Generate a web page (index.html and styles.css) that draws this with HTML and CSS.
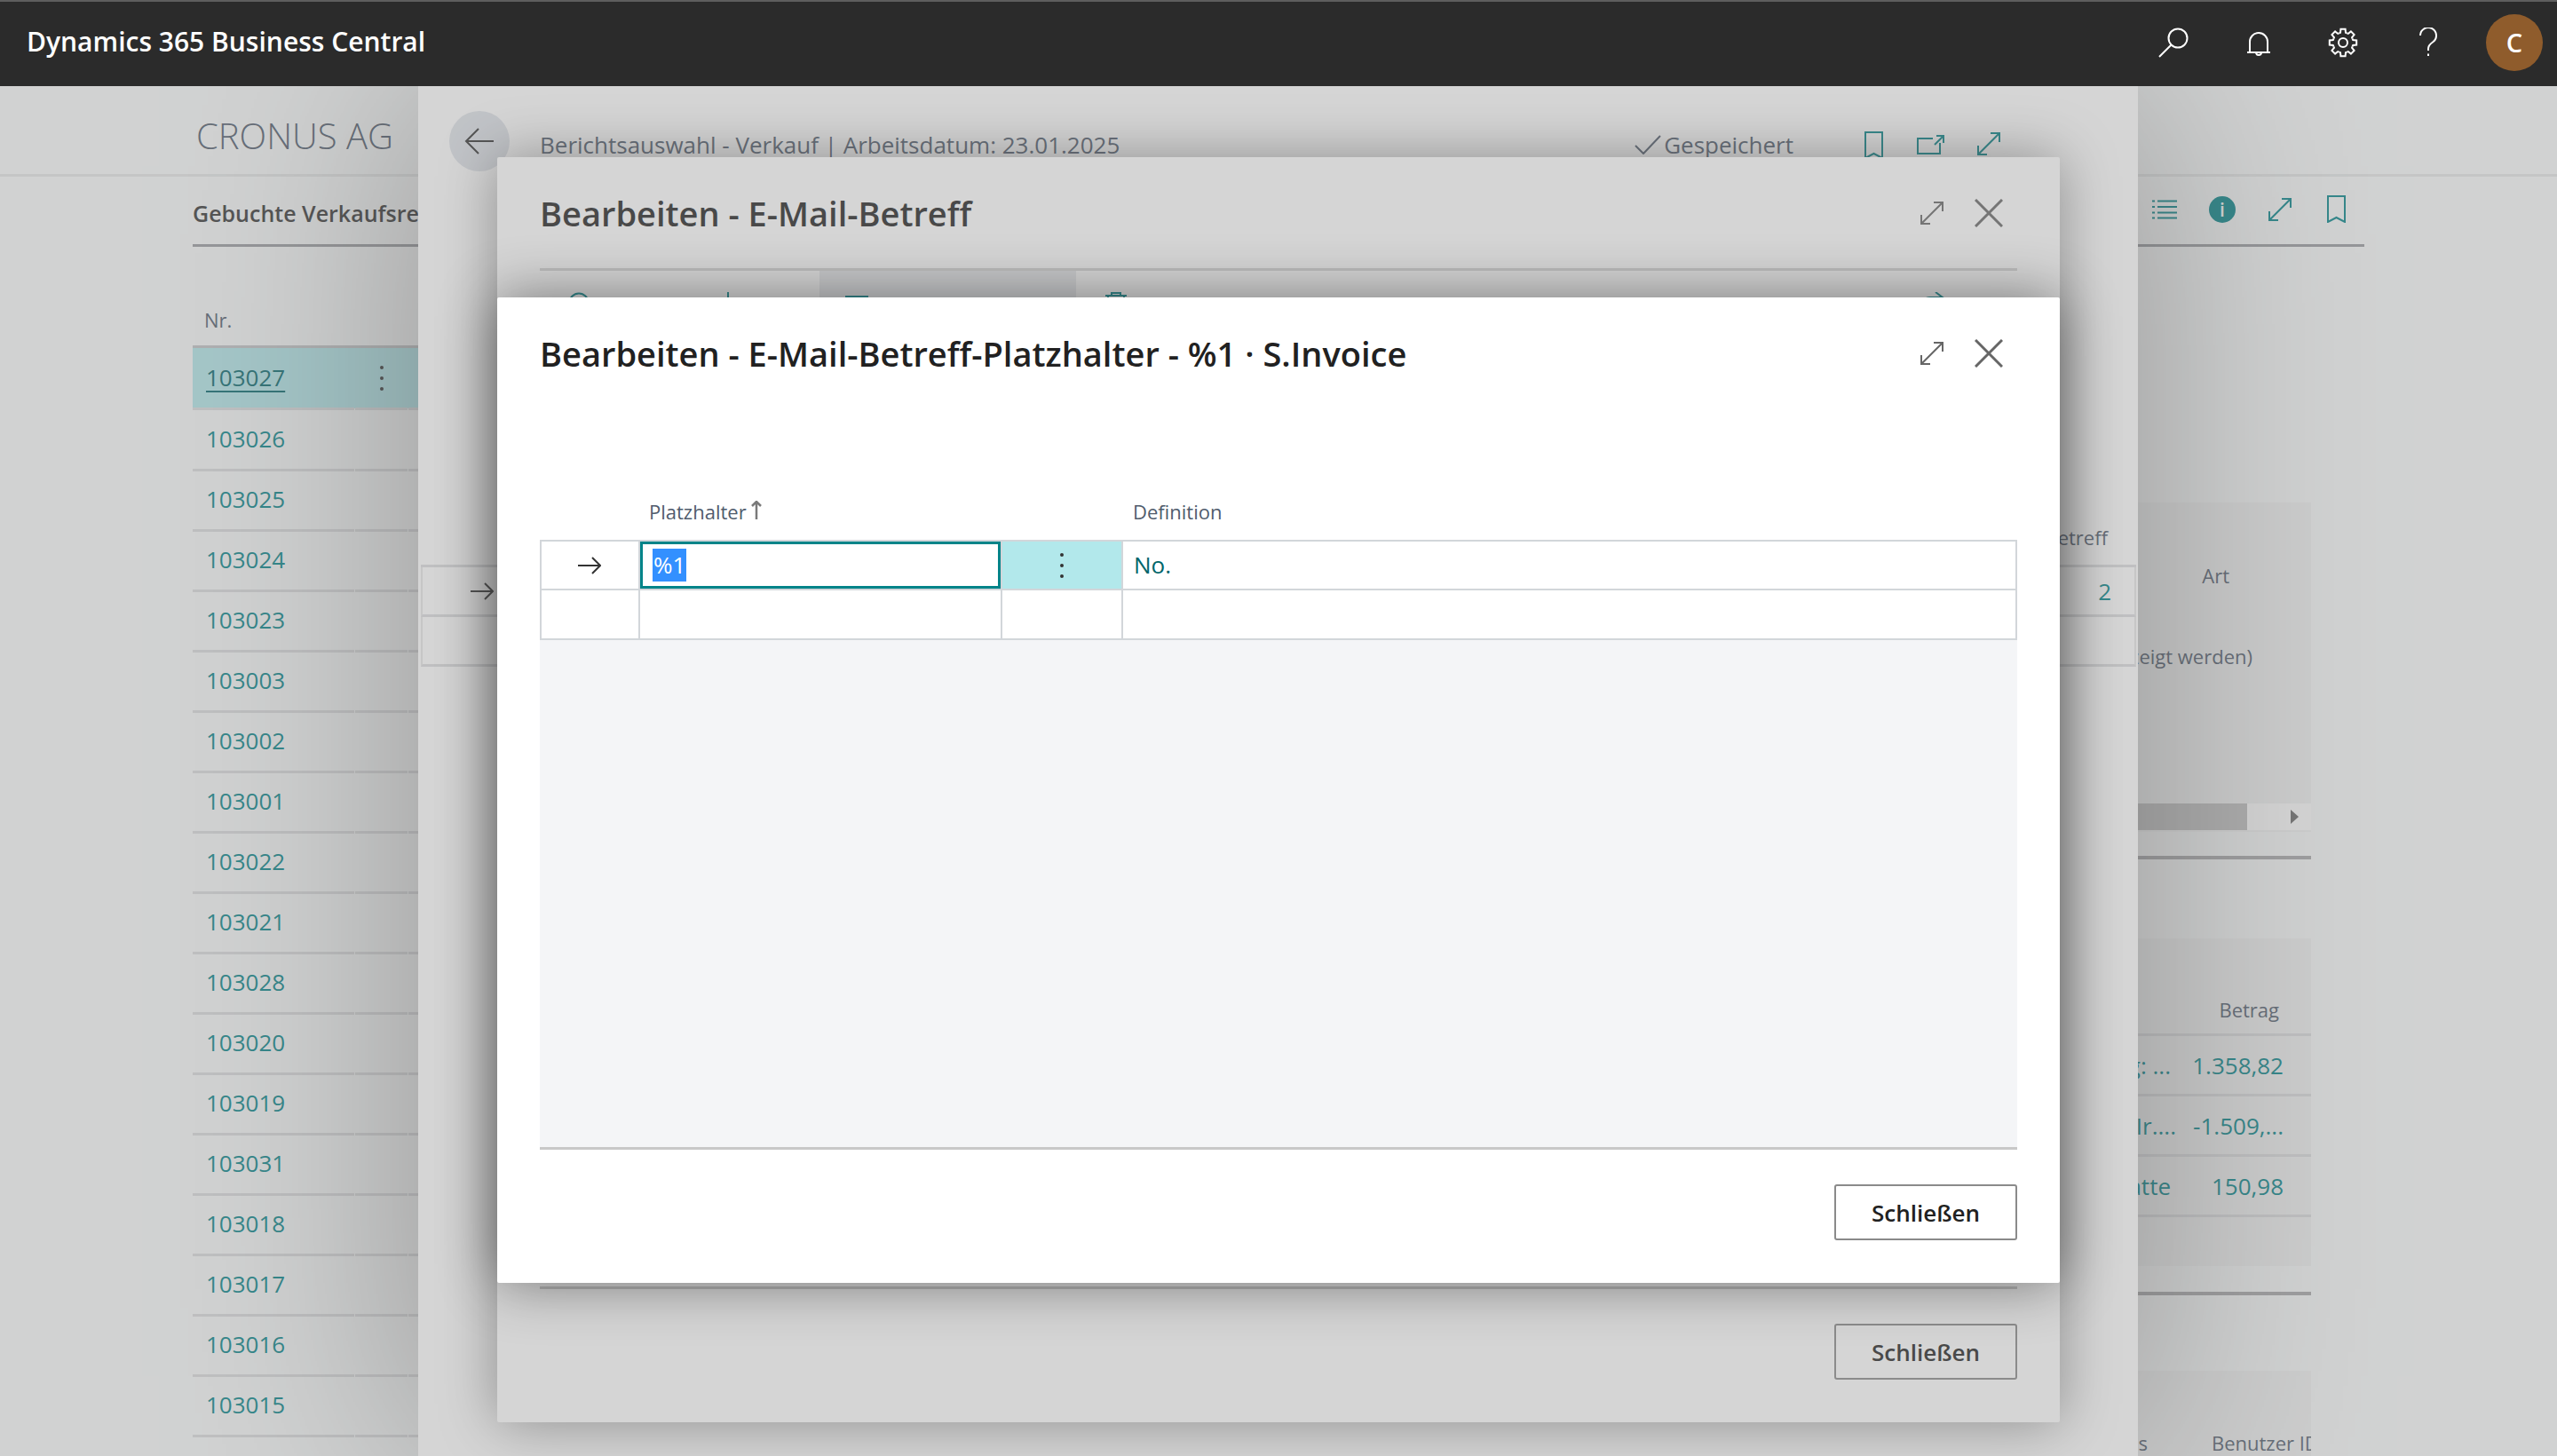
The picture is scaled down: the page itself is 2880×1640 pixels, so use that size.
FILE: index.html
```html
<!DOCTYPE html>
<html lang="de">
<head>
  <meta charset="UTF-8">
  <title>Dynamics 365 Business Central</title>
  <link rel="stylesheet" href="styles.css">
</head>
<body>
  <svg class="defs" width="0" height="0">
    <defs>
      <path id="gear-tooth" d="M-4.4 -10.6L-3 -11.2L-2.6 -15.2H2.6L3 -11.2L4.4 -10.6"/>
      <g id="ico-expand" fill="none" stroke="currentColor" stroke-width="2">
        <path d="M2 26L26 2M16 2H26V12M2 16V26H12"/>
      </g>
      <g id="ico-close" fill="none" stroke="currentColor" stroke-width="3">
        <path d="M1 1L31 31M31 1L1 31"/>
      </g>
      <g id="ico-bookmark" fill="none" stroke="currentColor" stroke-width="2">
        <path d="M1 1H20V30L10.500 25L1 30Z"/>
      </g>
      <g id="ico-arrow" fill="none" stroke="currentColor" stroke-width="2">
        <path d="M0 10H25M16 1L25 10L16 19"/>
      </g>
    </defs>
  </svg>

  <header class="topbar">
    <div class="brand">Dynamics 365 Business Central</div>
    <div class="topbar-icons">
      <svg class="ti ti-search" width="34" height="34" viewBox="0 0 34 34"><circle cx="22" cy="12" r="10.500"/><path d="M14.500 19.500L1 33"/></svg>
      <svg class="ti ti-bell" width="26" height="30" viewBox="0 0 26 30"><path d="M3 24V12a10 10 0 0 1 20 0V24M0 24H26M10 24a3 3 0 0 0 6 0"/></svg>
      <svg class="ti ti-gear" width="34" height="34" viewBox="0 0 34 34">
        <g transform="translate(17 17)">
          <use href="#gear-tooth"/>
          <use href="#gear-tooth" transform="rotate(45)"/>
          <use href="#gear-tooth" transform="rotate(90)"/>
          <use href="#gear-tooth" transform="rotate(135)"/>
          <use href="#gear-tooth" transform="rotate(180)"/>
          <use href="#gear-tooth" transform="rotate(225)"/>
          <use href="#gear-tooth" transform="rotate(270)"/>
          <use href="#gear-tooth" transform="rotate(315)"/>
          <circle r="5"/>
        </g>
      </svg>
      <svg class="ti ti-help" width="20" height="33" viewBox="0 0 20 33"><path d="M1 9a9 9 0 1 1 14 7.500c-3 2-5 3.500-5 7.500v2"/><path d="M10 29.500v2.500"/></svg>
      <div class="avatar">C</div>
    </div>
  </header>

  <main class="stage">
    <!-- Seite im Hintergrund -->
    <div class="company-bar"><span class="company">CRONUS AG</span></div>
    <div class="page-body">
      <div class="page-title-row">
        <span class="page-title">Gebuchte Verkaufsrechnungen</span>
        <div class="page-actions">
          <svg class="teal" width="28" height="22" viewBox="0 0 28 22"><path d="M0 1.500H3M6 1.500H28M0 8H3M6 8H28M0 14.500H3M6 14.500H28M0 20.500H3M6 20.500H28" stroke="currentColor" stroke-width="2"/></svg>
          <div class="info-dot">i</div>
          <svg class="teal" width="28" height="28" viewBox="0 0 28 28"><use href="#ico-expand"/></svg>
          <svg class="teal page-bm" width="21" height="31" viewBox="0 0 21 31"><use href="#ico-bookmark"/></svg>
        </div>
      </div>
      <div class="page-columns">
        <div class="doc-list">
          <div class="doc-head"><span>Nr.</span><span></span><span>Debitor</span></div>
          <div class="doc-row is-current"><a class="doc-no">103027</a><span class="doc-menu"><i></i><i></i><i></i></span><span></span></div>
          <div class="doc-row"><a class="doc-no">103026</a><span></span><span></span></div>
          <div class="doc-row"><a class="doc-no">103025</a><span></span><span></span></div>
          <div class="doc-row"><a class="doc-no">103024</a><span></span><span></span></div>
          <div class="doc-row"><a class="doc-no">103023</a><span></span><span></span></div>
          <div class="doc-row"><a class="doc-no">103003</a><span></span><span></span></div>
          <div class="doc-row"><a class="doc-no">103002</a><span></span><span></span></div>
          <div class="doc-row"><a class="doc-no">103001</a><span></span><span></span></div>
          <div class="doc-row"><a class="doc-no">103022</a><span></span><span></span></div>
          <div class="doc-row"><a class="doc-no">103021</a><span></span><span></span></div>
          <div class="doc-row"><a class="doc-no">103028</a><span></span><span></span></div>
          <div class="doc-row"><a class="doc-no">103020</a><span></span><span></span></div>
          <div class="doc-row"><a class="doc-no">103019</a><span></span><span></span></div>
          <div class="doc-row"><a class="doc-no">103031</a><span></span><span></span></div>
          <div class="doc-row"><a class="doc-no">103018</a><span></span><span></span></div>
          <div class="doc-row"><a class="doc-no">103017</a><span></span><span></span></div>
          <div class="doc-row"><a class="doc-no">103016</a><span></span><span></span></div>
          <div class="doc-row"><a class="doc-no">103015</a><span></span><span></span></div>
        </div>
        <aside class="factbox">
          <section class="fact-card fact-empty">
            <div class="fact-art">Art</div>
            <div class="fact-note">(Es können keine Daten angezeigt werden)</div>
            <div class="fact-scroll"><span class="fact-thumb"></span><span class="fact-caret"></span></div>
          </section>
          <div class="fact-rule"></div>
          <section class="fact-card fact-lines">
            <div class="fact-head">Betrag</div>
            <div class="fact-row"><span>Betrag: ...</span><b>1.358,82</b></div>
            <div class="fact-row fact-row-long"><span>Beleg Ir....</span><b>-1.509,...</b></div>
            <div class="fact-row"><span>Rabatte</span><b>150,98</b></div>
          </section>
          <div class="fact-rule"></div>
          <section class="fact-card fact-user">
            <div class="fact-user-head"><span>Status</span><span>Benutzer ID</span></div>
          </section>
        </aside>
      </div>
    </div>

    <!-- Berichtsauswahl -->
    <section class="panel">
      <div class="panel-head">
        <div class="back-btn"><svg width="34" height="30" viewBox="0 0 34 30"><path d="M33 15H2M16 1L2 15L16 29" fill="none" stroke="currentColor" stroke-width="2"/></svg></div>
        <span class="crumb">Berichtsauswahl - Verkauf | Arbeitsdatum: 23.01.2025</span>
        <span class="saved">
          <svg width="30" height="22" viewBox="0 0 30 22"><path d="M1 12L10 21L29 1" fill="none" stroke="currentColor" stroke-width="2"/></svg>
          Gespeichert
        </span>
        <svg class="teal panel-bm" width="21" height="31" viewBox="0 0 21 31"><use href="#ico-bookmark"/></svg>
        <svg class="teal panel-share" width="31" height="22" viewBox="0 0 31 22"><path d="M18 4H1V21H26V9M20 11L29 2M22 1H30V9" fill="none" stroke="currentColor" stroke-width="2"/></svg>
        <svg class="teal panel-exp" width="28" height="28" viewBox="0 0 28 28"><use href="#ico-expand"/></svg>
      </div>
      <div class="panel-table">
        <div class="panel-table-head">E-Mail-Betreff</div>
        <div class="panel-row"><svg class="row-arrow" width="26" height="20" viewBox="0 0 26 20"><use href="#ico-arrow"/></svg><span class="panel-val">2</span></div>
        <div class="panel-row"></div>
      </div>
    </section>

    <!-- hinterer Dialog -->
    <section class="dialog dialog-back">
      <div class="dialog-head">
        <h2 class="dialog-title">Bearbeiten - E-Mail-Betreff</h2>
        <svg class="dlg-expand" width="28" height="28" viewBox="0 0 28 28"><use href="#ico-expand"/></svg>
        <svg class="dlg-close" width="32" height="32" viewBox="0 0 32 32"><use href="#ico-close"/></svg>
      </div>
      <div class="dialog-body">
        <div class="toolbar">
          <div class="tool tool-search"><svg width="24" height="24" viewBox="0 0 24 24"><circle cx="12" cy="12" r="10.500" fill="none" stroke="currentColor" stroke-width="2"/></svg>Suchen</div>
          <div class="tool tool-new"><svg width="24" height="24" viewBox="0 0 24 24"><path d="M12 0V24M0 12H24" stroke="currentColor" stroke-width="2"/></svg>Neu</div>
          <div class="tool tool-edit"><span class="tool-square"></span>Liste bearbeiten</div>
          <div class="tool tool-del"><svg width="24" height="26" viewBox="0 0 24 26"><path d="M7 4V1H17V4M0 4H24M3 4V25H21V4" fill="none" stroke="currentColor" stroke-width="2"/></svg>Löschen</div>
          <div class="tool-right">
            <svg width="28" height="26" viewBox="0 0 28 26"><path d="M2 24V16a10 10 0 0 1 10-10H26M18 0L26 6L18 12" fill="none" stroke="currentColor" stroke-width="2"/></svg>
            <span class="tool-bars"></span>
          </div>
        </div>
      </div>
      <div class="dialog-foot"><button class="btn">Schließen</button></div>
    </section>

    <div class="scrim"></div>

    <!-- vorderer Dialog -->
    <section class="dialog dialog-front">
      <div class="dialog-head">
        <h2 class="dialog-title">Bearbeiten - E-Mail-Betreff-Platzhalter - %1 · S.Invoice</h2>
        <svg class="dlg-expand" width="28" height="28" viewBox="0 0 28 28"><use href="#ico-expand"/></svg>
        <svg class="dlg-close" width="32" height="32" viewBox="0 0 32 32"><use href="#ico-close"/></svg>
      </div>
      <div class="dialog-body ph-body">
        <div class="ph-head">
          <span></span>
          <span class="ph-col">Platzhalter <svg class="sort-up" width="12" height="21" viewBox="0 0 12 21"><path d="M6 1V21M1 6L6 1L11 6" fill="none" stroke="currentColor" stroke-width="2.500"/></svg></span>
          <span></span>
          <span class="ph-col ph-col-def">Definition</span>
        </div>
        <div class="ph-grid">
          <div class="ph-cell ph-arrow"><svg width="26" height="20" viewBox="0 0 26 20"><use href="#ico-arrow"/></svg></div>
          <div class="ph-cell ph-focus"><span class="ph-selected">%1</span></div>
          <div class="ph-cell ph-menu"><i></i><i></i><i></i></div>
          <div class="ph-cell ph-value">No.</div>
          <div class="ph-cell"></div>
          <div class="ph-cell"></div>
          <div class="ph-cell"></div>
          <div class="ph-cell"></div>
        </div>
        <div class="ph-rest"></div>
      </div>
      <div class="dialog-foot"><button class="btn">Schließen</button></div>
    </section>
  </main>
</body>
</html>
```

FILE: styles.css
```css
* {
  box-sizing: border-box;
}
html, body {
  margin: 0;
  height: 100%;
}
body {
  width: 2880px;
  height: 1640px;
  overflow: hidden;
  background: #f9fbfb;
  color: #212121;
  font-family: "Open Sans", "Noto Sans", sans-serif;
  font-size: 26px;
}
.defs {
  position: absolute;
}
.teal {
  color: #008489;
  display: block;
  flex: none;
}

/* Kopfzeile */
.topbar {
  height: 97px;
  background: #2b2b2b;
  border-top: 2px solid #5e5e5e;
  display: flex;
  align-items: center;
  justify-content: space-between;
  padding: 0 16px 4px 30px;
  color: #fff;
}
.brand {
  font-size: 30px;
  font-weight: 600;
  margin-top: -2px;
}
.topbar-icons {
  display: flex;
  align-items: center;
}
.ti {
  fill: none;
  stroke: #fff;
  stroke-width: 2;
  display: block;
}
.ti use {
  stroke: #fff;
}
.ti-bell {
  margin-left: 66px;
  margin-top: 4px;
}
.ti-gear {
  margin-left: 65px;
}
.ti-help {
  margin-left: 69px;
}
.avatar {
  width: 64px;
  height: 64px;
  margin-left: 55px;
  border-radius: 50%;
  background: #8f5c2c;
  color: #fff;
  display: flex;
  align-items: center;
  justify-content: center;
  font-size: 29px;
  font-weight: 600;
}

/* Seite */
.stage {
  position: relative;
  height: 1543px;
  overflow: hidden;
}
.company-bar {
  height: 102px;
  border-bottom: 3px solid #e6e8e8;
  padding: 34px 0 0 221px;
}
.company {
  font-size: 40px;
  font-weight: 300;
  line-height: 44px;
  color: #505c6d;
}
.page-body {
  padding: 0 217px;
}
.page-title-row {
  height: 79px;
  border-bottom: 3px solid #9a9ca0;
  display: flex;
  justify-content: space-between;
  align-items: flex-start;
}
.page-title {
  font-weight: 600;
  font-size: 25px;
  line-height: 34px;
  margin-top: 24px;
  color: #333;
}
.page-actions {
  display: flex;
  align-items: center;
  gap: 36px;
  margin: 21px 21px 0 0;
}
.page-bm {
  margin-left: 3px;
}
.info-dot {
  width: 30px;
  height: 30px;
  border-radius: 50%;
  background: #008489;
  color: #fff;
  font-size: 21px;
  font-weight: 600;
  line-height: 30px;
  text-align: center;
}
.page-columns {
  display: flex;
  justify-content: space-between;
}

.doc-list {
  width: 1000px;
  padding-top: 64px;
}
.doc-head,
.doc-row {
  display: grid;
  grid-template-columns: 182px 59px 1fr;
  gap: 1px;
}
.doc-head {
  height: 50px;
  padding-left: 13px;
  font-size: 22px;
  line-height: 36px;
  color: #505c6d;
}
.doc-row {
  height: 68px;
}
.doc-row > * {
  border-bottom: 3px solid #dcdddf;
}
.doc-no {
  color: #008489;
  padding-left: 15px;
  line-height: 68px;
}
.is-current {
  background: #b2e8eb;
  border-top: 3px solid #c2c4c6;
  margin-top: -3px;
  height: 71px;
}
.is-current .doc-no {
  color: #00666b;
  text-decoration: underline;
  text-underline-offset: 5px;
  line-height: 67px;
}
.doc-menu {
  display: flex;
  flex-direction: column;
  align-items: center;
  justify-content: center;
  gap: 8px;
}
.doc-menu i,
.ph-menu i {
  width: 4px;
  height: 4px;
  border-radius: 50%;
  background: #333;
}

/* Infobereich rechts */
.factbox {
  width: 303px;
  margin-right: 60px;
  padding-top: 288px;
  color: #505c6d;
  white-space: nowrap;
}
.fact-card {
  background: #f2f3f3;
}
.fact-empty {
  height: 371px;
  padding-top: 64px;
  display: flex;
  flex-direction: column;
  align-items: flex-end;
  font-size: 22px;
}
.fact-art {
  margin-right: 92px;
  line-height: 36px;
}
.fact-note {
  margin: 55px 66px 0 0;
  line-height: 36px;
}
.fact-scroll {
  margin-top: auto;
  margin-bottom: 2px;
  align-self: stretch;
  height: 30px;
  background: #fff;
  display: flex;
  align-items: center;
  justify-content: space-between;
  padding-right: 14px;
}
.fact-thumb {
  width: 231px;
  height: 30px;
  background: #c0c0c0;
}
.fact-caret {
  border-left: 9px solid #666;
  border-top: 8px solid transparent;
  border-bottom: 8px solid transparent;
}
.fact-rule {
  height: 4px;
  margin-top: 27px;
  background: #a8a8aa;
}
.fact-lines {
  margin-top: 89px;
  height: 369px;
  padding-top: 62px;
}
.fact-lines + .fact-rule {
  margin-top: 29px;
}
.fact-head {
  height: 48px;
  padding: 0 36px 0 0;
  font-size: 22px;
  line-height: 36px;
  text-align: right;
  border-bottom: 3px solid #dcdddf;
}
.fact-row {
  height: 68px;
  display: flex;
  align-items: center;
  border-bottom: 3px solid #dcdddf;
  color: #008489;
  padding-right: 31px;
}
.fact-row span {
  width: 145px;
  text-align: right;
}
.fact-row-long span {
  width: 151px;
}
.fact-row b {
  margin-left: auto;
  font-weight: 400;
}
.fact-user {
  margin-top: 85px;
  height: 200px;
  padding: 63px 0 0 55px;
  font-size: 22px;
}
.fact-user-head {
  display: flex;
  gap: 72px;
  overflow: hidden;
  line-height: 36px;
}

/* Berichtsauswahl */
.panel {
  position: absolute;
  left: 471px;
  top: 0;
  width: 1937px;
  bottom: 0;
  background: #fff;
  box-shadow: 0 0 320px rgba(0, 0, 0, 0.4);
}
.panel-head {
  display: flex;
  align-items: center;
  height: 68px;
  margin-top: 28px;
  padding-left: 35px;
  color: #505c6d;
}
.back-btn {
  width: 68px;
  height: 68px;
  flex: none;
  border-radius: 50%;
  background: #dfe3e9;
  display: flex;
  align-items: center;
  justify-content: center;
  color: #333;
}
.crumb {
  margin-left: 34px;
  margin-top: 8px;
  font-size: 26px;
}
.saved {
  margin-left: auto;
  display: flex;
  align-items: center;
  gap: 3px;
  margin-top: 8px;
  font-size: 26px;
}
.panel-bm {
  margin: 8px 0 0 80px;
}
.panel-share {
  margin: 8px 0 0 38px;
}
.panel-exp {
  margin: 6px 154px 0 36px;
}
.panel-table {
  margin: 0 2px 0 3px;
  padding-top: 350px;
}
.panel-table-head {
  height: 96px;
  padding: 44px 32px 0 0;
  text-align: right;
  font-size: 22px;
  line-height: 36px;
  color: #505c6d;
  border-bottom: 3px solid #dcdddf;
}
.panel-row {
  height: 56px;
  border-bottom: 3px solid #dcdddf;
  border-right: 2px solid #e8e8e8;
  border-left: 2px solid #e8e8e8;
  display: flex;
  align-items: center;
  justify-content: space-between;
  padding: 0 26px 0 54px;
}
.row-arrow {
  color: #333;
}
.panel-val {
  color: #008489;
}

/* Dialoge */
.dialog {
  position: absolute;
  left: 560px;
  width: 1760px;
  background: #fff;
  border-radius: 2px;
  display: flex;
  flex-direction: column;
  box-shadow: 0 0 64px rgba(0, 0, 0, 0.45);
}
.dialog-back {
  top: 80px;
  height: 1425px;
}
.dialog-front {
  top: 238px;
  height: 1110px;
}
.dialog-head {
  height: 128px;
  flex: none;
  padding: 0 64px 2px 48px;
  display: flex;
  align-items: center;
}
.dialog-title {
  margin: 0;
  font-size: 38px;
  font-weight: 600;
  color: #212121;
  white-space: nowrap;
}
.dlg-expand {
  margin-left: auto;
  color: #666;
}
.dlg-close {
  margin-left: 34px;
  color: #666;
}
.dialog-body {
  flex: 1;
  margin: 0 48px;
  display: flex;
  flex-direction: column;
  border-bottom: 3px solid #c8c8c8;
}
.dialog-foot {
  height: 150px;
  flex: none;
  padding: 39px 48px 0;
  display: flex;
  justify-content: flex-end;
  align-items: flex-start;
}
.btn {
  width: 206px;
  height: 63px;
  background: #fff;
  border: 2px solid #8a8a8a;
  border-radius: 3px;
  font-family: inherit;
  font-size: 26px;
  font-weight: 600;
  color: #212121;
}

/* Werkzeugleiste im hinteren Dialog */
.toolbar {
  display: flex;
  height: 88px;
  border-top: 3px solid #d8d8d8;
  margin-top: -3px;
  color: #008489;
}
.tool {
  display: flex;
  align-items: flex-start;
  gap: 16px;
  padding-top: 24px;
  color: #333;
}
.tool svg {
  color: #008489;
  flex: none;
}
.tool-search {
  width: 200px;
  padding-left: 32px;
}
.tool-new {
  width: 115px;
}
.tool-edit {
  width: 289px;
  padding-left: 29px;
  background: #e9ebee;
  padding-top: 28px;
}
.tool-square {
  width: 26px;
  height: 26px;
  background: #008489;
  flex: none;
}
.tool-del {
  padding-left: 33px;
}
.tool-right {
  margin-left: auto;
  display: flex;
  align-items: flex-start;
  gap: 34px;
  padding: 24px 20px 0 0;
}
.tool-bars {
  width: 28px;
  height: 3px;
  margin-top: 7px;
  background: #008489;
  display: block;
}

/* Abdunklung */
.scrim {
  position: absolute;
  inset: 0;
  background: rgba(143, 143, 143, 0.374);
}

/* Platzhalter-Tabelle */
.ph-body {
  padding-top: 87px;
}
.ph-head,
.ph-grid {
  display: grid;
  grid-template-columns: 109px 406px 134px 1fr;
  column-gap: 2px;
}
.ph-head {
  height: 58px;
  padding: 0 2px;
  font-size: 22px;
  line-height: 52px;
  color: #505c6d;
}
.ph-col {
  padding-left: 10px;
  display: flex;
  align-items: center;
  gap: 5px;
  height: 52px;
}
.ph-col-def {
  padding-left: 11px;
}
.sort-up {
  color: #7a7a7a;
  margin-top: -4px;
}
.ph-grid {
  gap: 2px;
  padding: 2px;
  background: #d2d6da;
  grid-template-rows: 53px 54px;
}
.ph-cell {
  background: #fff;
}
.ph-arrow {
  display: flex;
  align-items: center;
  justify-content: center;
  color: #333;
  padding-right: 2px;
}
.ph-focus {
  border: 3px solid #008489;
  padding-left: 11px;
  display: flex;
  align-items: center;
}
.ph-selected {
  background: #3390ff;
  color: #fff;
  padding: 0 1px;
  line-height: 37px;
}
.ph-menu {
  background: #b2e8eb;
  display: flex;
  flex-direction: column;
  align-items: center;
  justify-content: center;
  gap: 8px;
}
.ph-value {
  color: #00666b;
  padding-left: 12px;
  line-height: 53px;
}
.ph-rest {
  flex: 1;
  background: #f4f5f7;
}
```
